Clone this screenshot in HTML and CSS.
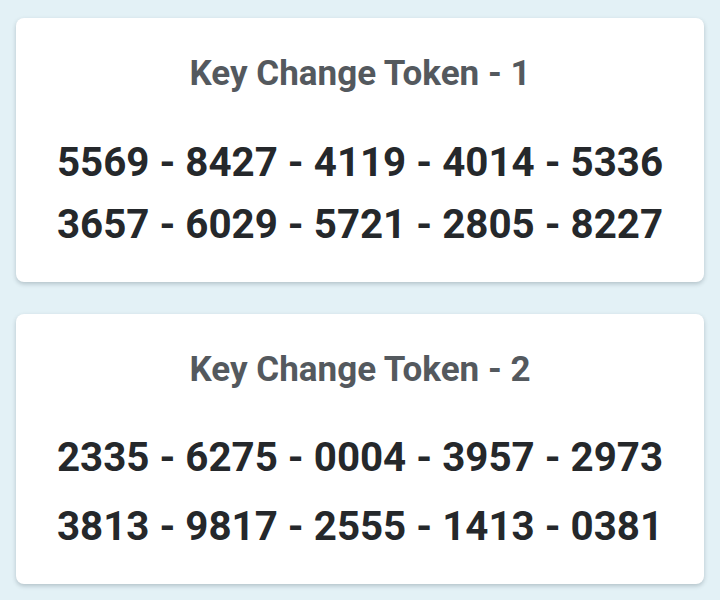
FILE: index.html
```html
<!DOCTYPE html>
<html lang="en">
<head>
<meta charset="utf-8">
<title>Key Change Tokens</title>
<link rel="stylesheet" href="styles.css">
</head>
<body>
<main class="list">
  <section class="card">
    <h2 class="card-title">Key Change Token - 1</h2>
    <div class="codes">
      <p class="code">5569 - 8427 - 4119 - 4014 - 5336</p>
      <p class="code">3657 - 6029 - 5721 - 2805 - 8227</p>
    </div>
  </section>
  <section class="card card-loose">
    <h2 class="card-title">Key Change Token - 2</h2>
    <div class="codes">
      <p class="code">2335 - 6275 - 0004 - 3957 - 2973</p>
      <p class="code">3813 - 9817 - 2555 - 1413 - 0381</p>
    </div>
  </section>
</main>
</body>
</html>
```
FILE: styles.css
```css
html, body {
  margin: 0;
  padding: 0;
}
body {
  background: #e3f1f6;
  font-family: Roboto, "Noto Sans", "Liberation Sans", sans-serif;
}
.list {
  display: flex;
  flex-direction: column;
  gap: 32px;
  padding: 18px 16px;
}
.card {
  background: #ffffff;
  border-radius: 8px;
  box-shadow: 0 2px 4px rgba(40, 60, 70, 0.25);
  padding: 38px 0 26px;
  text-align: center;
}
.card-title {
  margin: 0;
  font-size: 35px;
  line-height: 36px;
  font-weight: 700;
  color: #54595e;
}
.codes {
  display: flex;
  flex-direction: column;
  margin-top: 40px;
}
.card-loose .codes {
  margin-top: 39px;
  gap: 7px;
}
.code {
  margin: 0;
  font-size: 40.3px;
  line-height: 62px;
  font-weight: 700;
  color: #25282b;
}
```
